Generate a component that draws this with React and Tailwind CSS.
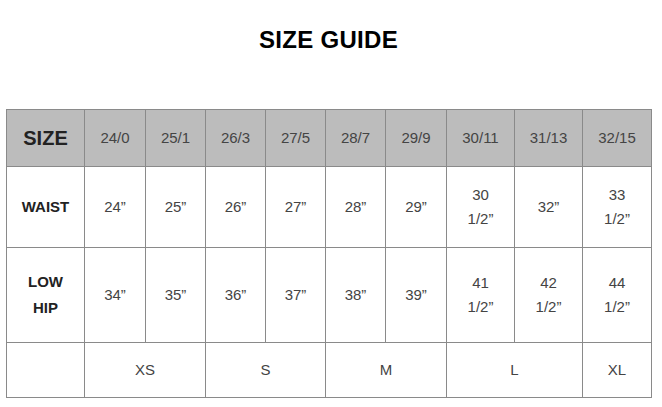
import React from "react";

const sizes = ["24/0", "25/1", "26/3", "27/5", "28/7", "29/9", "30/11", "31/13", "32/15"];

const waist = [["24”"], ["25”"], ["26”"], ["27”"], ["28”"], ["29”"], ["30", "1/2”"], ["32”"], ["33", "1/2”"]];

const lowHip = [["34”"], ["35”"], ["36”"], ["37”"], ["38”"], ["39”"], ["41", "1/2”"], ["42", "1/2”"], ["44", "1/2”"]];

const letters = [
  { label: "XS", span: 2 },
  { label: "S", span: 2 },
  { label: "M", span: 2 },
  { label: "L", span: 2 },
  { label: "XL", span: 1 },
];

const colWidths = ["w-[78px]", "w-[61px]", "w-[60px]", "w-[60px]", "w-[60px]", "w-[60px]", "w-[61px]", "w-[68px]", "w-[68px]", "w-[69px]"];

const Lines = ({ parts }) =>
  parts.map((p, i) => (
    <React.Fragment key={i}>
      {i > 0 && <br />}
      {p}
    </React.Fragment>
  ));

export default function App() {
  const cell = "border border-[#8a8a8a] text-center align-middle p-0";

  return (
    <div className="min-h-screen bg-white pl-[6px] font-['Liberation_Sans',Arial,sans-serif]">
      <div className="w-[645px]">
        <h1 className="pt-[26px] text-center text-[24px] leading-[28px] font-bold text-black tracking-[0.3px]">
          SIZE GUIDE
        </h1>

        {/* Size table */}
        <table className="mt-[55px] w-[645px] table-fixed border-collapse">
          <colgroup>
            {colWidths.map((w, i) => (
              <col key={i} className={w} />
            ))}
          </colgroup>
          <tbody>
            <tr className="h-[57px] bg-[#bcbcbc]">
              <td className={`${cell} text-[20px] font-bold text-[#222]`}>SIZE</td>
              {sizes.map((s) => (
                <td key={s} className={`${cell} text-[15px] text-[#444]`}>
                  {s}
                </td>
              ))}
            </tr>
            <tr className="h-[81px]">
              <td className={`${cell} text-[15px] font-bold text-[#222]`}>WAIST</td>
              {waist.map((v, i) => (
                <td key={i} className={`${cell} text-[15px] leading-[24px] text-[#444]`}>
                  <Lines parts={v} />
                </td>
              ))}
            </tr>
            <tr className="h-[95px]">
              <td className={`${cell} text-[15px] leading-[26px] font-bold text-[#222]`}>
                LOW
                <br />
                HIP
              </td>
              {lowHip.map((v, i) => (
                <td key={i} className={`${cell} text-[15px] leading-[24px] text-[#444]`}>
                  <Lines parts={v} />
                </td>
              ))}
            </tr>
            <tr className="h-[55px]">
              <td className={cell}></td>
              {letters.map((l) => (
                <td key={l.label} colSpan={l.span} className={`${cell} text-[15px] text-[#444]`}>
                  {l.label}
                </td>
              ))}
            </tr>
          </tbody>
        </table>
      </div>
    </div>
  );
}
